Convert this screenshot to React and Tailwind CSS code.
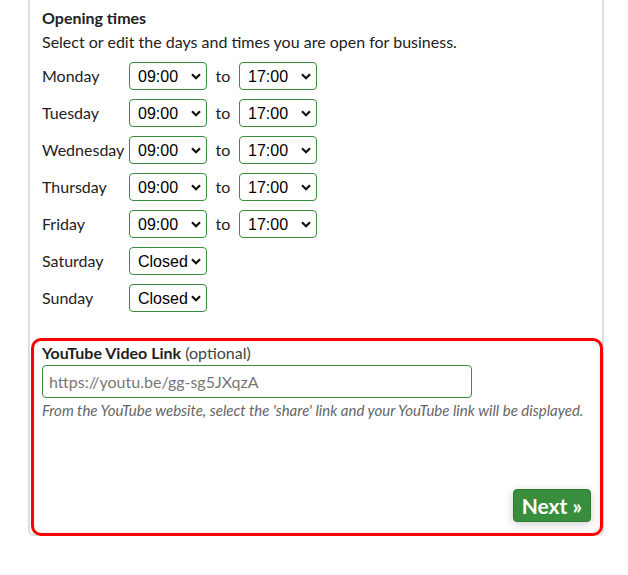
import { useState } from "react"

const days = [
  { name: "Monday", open: "09:00", close: "17:00" },
  { name: "Tuesday", open: "09:00", close: "17:00" },
  { name: "Wednesday", open: "09:00", close: "17:00" },
  { name: "Thursday", open: "09:00", close: "17:00" },
  { name: "Friday", open: "09:00", close: "17:00" },
  { name: "Saturday", open: "Closed" },
  { name: "Sunday", open: "Closed" },
]

const times = ["Closed", "08:00", "09:00", "10:00", "17:00", "18:00"]

function TimeSelect({ value }) {
  const [v, setV] = useState(value)
  return (
    <div className="relative h-[28px] w-[78px]">
      <select
        value={v}
        onChange={(e) => setV(e.target.value)}
        className="h-full w-full appearance-none rounded-[4px] border border-[#388e3c] bg-white pl-[8px] pt-[1px] text-[16px] text-black outline-none"
        style={{ fontFamily: '"Liberation Sans", Arial, sans-serif' }}
      >
        {times.map((t) => (
          <option key={t}>{t}</option>
        ))}
      </select>
      <svg
        className="pointer-events-none absolute right-[6px] top-[11px]"
        width="10"
        height="7"
        viewBox="0 0 10 7"
      >
        <path d="M1 1.2 L5 5.2 L9 1.2" fill="none" stroke="#111" strokeWidth="2.2" />
      </svg>
    </div>
  )
}

export default function App() {
  const [link, setLink] = useState("")

  return (
    <div
      className="min-h-[575px] bg-white pl-[28px] text-[#222]"
      style={{ fontFamily: 'Lato, "Noto Sans", sans-serif' }}
    >
      <div className="w-[576px] rounded-b-[6px] border-x-2 border-b-2 border-[#ddd]">
        {/* Opening times */}
        <div className="pl-[12px] pt-[6px]">
          <h3 className="text-[16px] font-bold leading-[24px]">Opening times</h3>
          <p className="text-[16px] leading-[24px]">
            Select or edit the days and times you are open for business.
          </p>
          <div className="mt-[8px] flex flex-col gap-[9px]">
            {days.map((d) => (
              <div key={d.name} className="flex items-center">
                <span className="w-[87px] text-[16px]">{d.name}</span>
                <TimeSelect value={d.open} />
                {d.close && (
                  <>
                    <span className="w-[32px] text-center text-[16px]">to</span>
                    <TimeSelect value={d.close} />
                  </>
                )}
              </div>
            ))}
          </div>
        </div>

        {/* YouTube link */}
        <div className="-mb-[2px] -mr-[1px] ml-[1px] mt-[26px] flex h-[198px] flex-col rounded-[10px] border-[3px] border-[#ff0000] px-[8px] pb-[11px] pt-[1px] shadow-[inset_0_0_6px_rgba(0,0,0,0.08)]">
          <label className="text-[16px] leading-[22px]">
            <span className="font-bold">YouTube Video Link</span>{" "}
            <span className="text-[#444]">(optional)</span>
          </label>
          <input
            type="text"
            value={link}
            onChange={(e) => setLink(e.target.value)}
            placeholder="https://youtu.be/gg-sg5JXqzA"
            className="mt-[1px] h-[33px] w-[430px] rounded-[4px] border border-[#388e3c] px-[6px] text-[16px] text-[#333] outline-none placeholder:text-[#777]"
          />
          <p className="mt-[2px] text-[15px] italic leading-[20px] text-[#666]">
            From the YouTube website, select the 'share' link and your YouTube link will be displayed.
          </p>
          <div className="mt-auto flex justify-end pr-[1px]">
            <button className="h-[33px] rounded-[4px] border border-[#2e7d32] bg-[#388e3c] px-[8px] text-[21px] font-bold leading-none text-white shadow-[0_2px_10px_rgba(0,0,0,0.2)]">
              Next »
            </button>
          </div>
        </div>
      </div>
    </div>
  )
}
